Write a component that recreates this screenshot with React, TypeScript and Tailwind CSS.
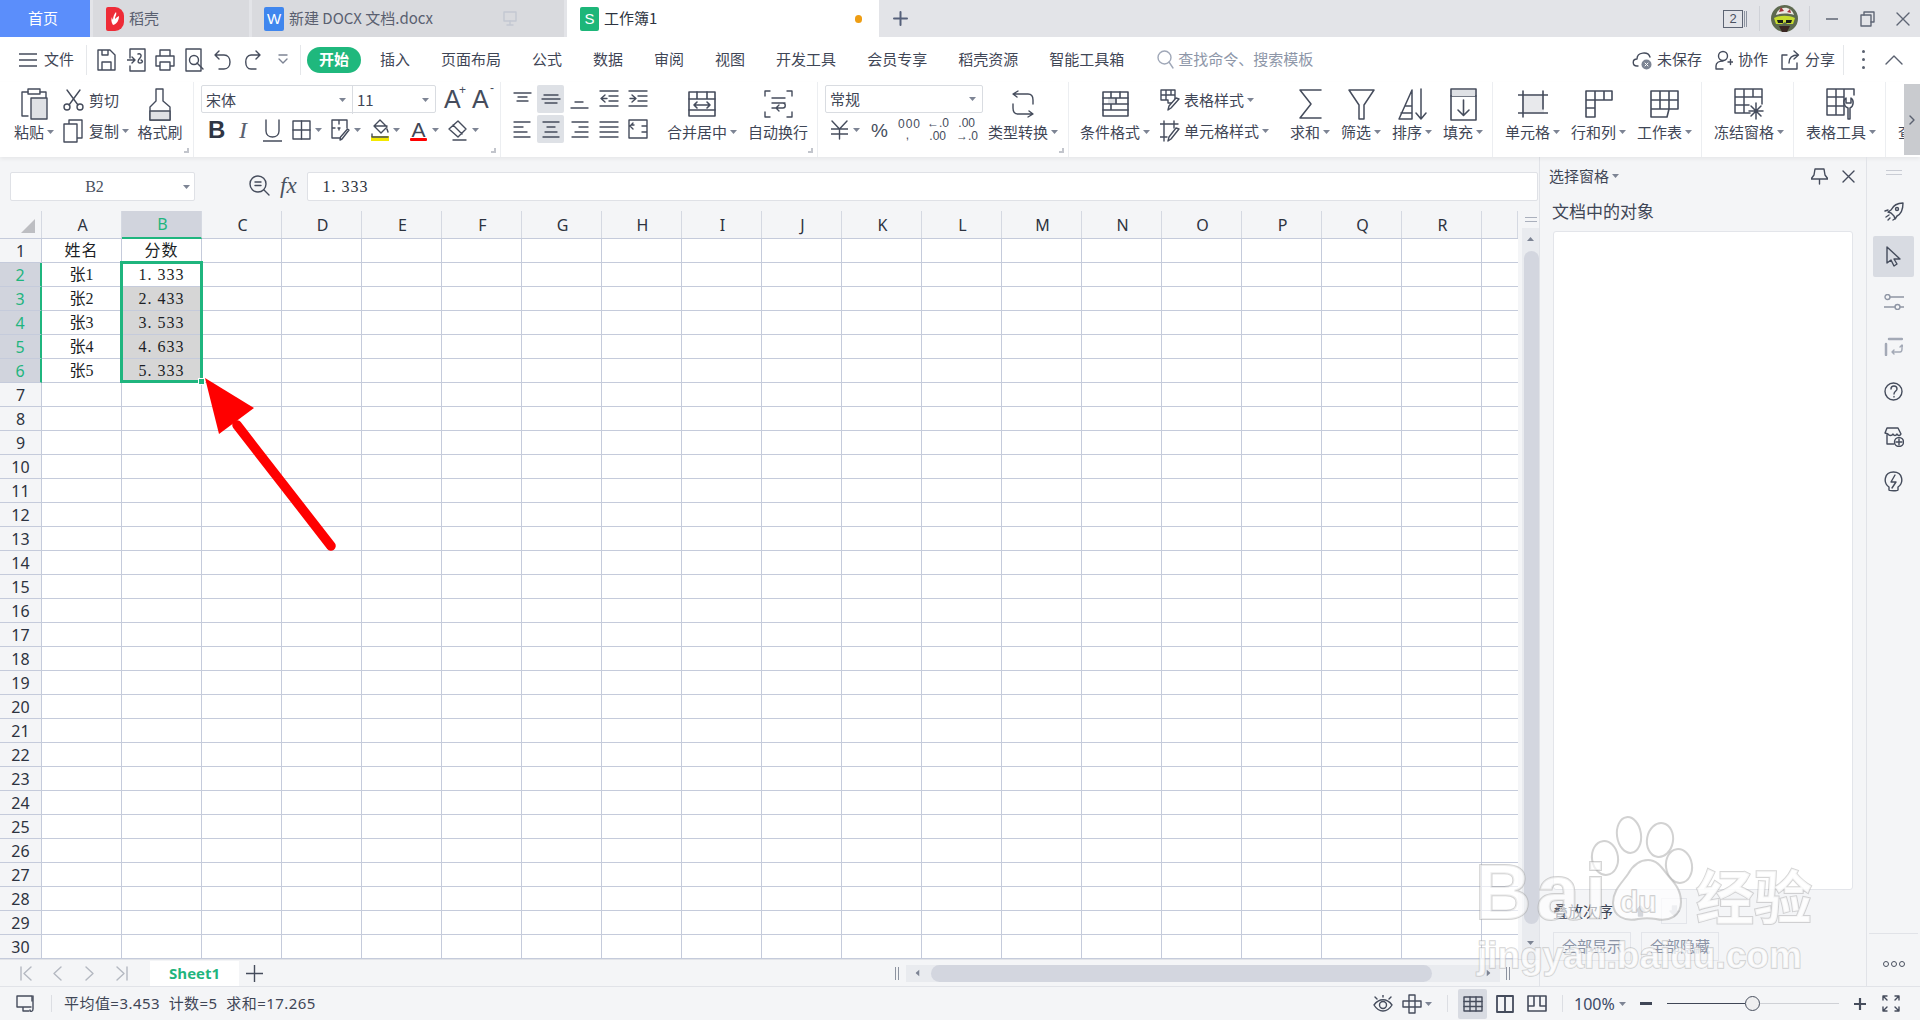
import type { ReactNode } from 'react';

const INK = '#454c5c';
const columns = ['A', 'B', 'C', 'D', 'E', 'F', 'G', 'H', 'I', 'J', 'K', 'L', 'M', 'N', 'O', 'P', 'Q', 'R', ''];
const rows = Array.from({ length: 30 }, (_, i) => i + 1);
const sheetData: Record<string, string> = {
  A1: '姓名', B1: '分数',
  A2: '张1', B2: '1. 333',
  A3: '张2', B3: '2. 433',
  A4: '张3', B4: '3. 533',
  A5: '张4', B5: '4. 633',
  A6: '张5', B6: '5. 333',
};

const Icon = ({ w, h, children, stroke = INK, sw = 1.4 }: { w: number; h: number; children: ReactNode; stroke?: string; sw?: number }) => (
  <svg width={w} height={h} viewBox={`0 0 ${w} ${h}`} fill="none" stroke={stroke} strokeWidth={sw} strokeLinecap="round" strokeLinejoin="round" className="shrink-0 block">
    {children}
  </svg>
);

const Caret = ({ className = '' }: { className?: string }) => (
  <svg width="7" height="4" viewBox="0 0 7 4" className={`shrink-0 ${className}`}>
    <path d="M0 0h7L3.5 4z" fill="#7d8494" />
  </svg>
);

const Corner = () => <div className="absolute right-[4px] bottom-[4px] w-[5px] h-[5px] border-r-2 border-b-2 border-[#c2c5cc]" />;

const BigBtn = ({ icon, label, caret = true, className }: { icon: ReactNode; label: string; caret?: boolean; className: string }) => (
  <div className={`flex flex-col items-center shrink-0 pt-[5px] ${className}`}>
    <div className="h-[34px] flex items-center justify-center">{icon}</div>
    <div className="h-[22px] flex items-center gap-[3px] text-[15px] text-[#3f4656] whitespace-nowrap">
      <span>{label}</span>
      {caret && <Caret />}
    </div>
  </div>
);

const Group = ({ className, children, corner }: { className: string; children: ReactNode; corner?: boolean }) => (
  <div className={`relative flex shrink-0 h-full border-r border-[#eceef1] ${className}`}>
    {children}
    {corner && <Corner />}
  </div>
);

const Select = ({ className, label }: { className: string; label: string }) => (
  <div className={`h-[28px] flex items-center justify-between px-[4px] text-[15px] text-[#3f4656] ${className}`}>
    <span>{label}</span>
    <Caret className="mr-[2px]" />
  </div>
);

const Lines = ({ ys, xs }: { ys: number[]; xs: [number, number][] }) => (
  <Icon w={20} h={22}>
    {ys.map((y, i) => <path key={y} d={`M${xs[i][0]} ${y}H${xs[i][1]}`} />)}
  </Icon>
);

const TabBar = () => (
  <div className="flex h-[37px] bg-[#e3e4e8] shrink-0 items-stretch text-[15px]">
    <div className="w-[90px] bg-[#5b8efb] text-white flex items-center justify-center pr-[4px]">首页</div>
    <div className="ml-[3px] w-[156px] bg-[#d9dade] flex items-center pl-[13px] text-[#5a6070]">
      <div className="w-[18px] h-[24px] rounded-r-[9px] rounded-l-[2px] bg-[#ee2b37] flex items-center justify-center">
        <svg width="12" height="15" viewBox="0 0 12 15"><path d="M7 1c1 3-1 4-1 7 1-1 2-2 4-3 0 4-2 8-6 9C2 11 2 8 3 6c0 2 1 2 1 3 0-3 1-6 3-8z" fill="#fff" /></svg>
      </div>
      <span className="ml-[5px]">稻壳</span>
    </div>
    <div className="ml-[3px] w-[312px] bg-[#d9dade] flex items-center pl-[12px] text-[#5a6070]">
      <div className="w-[20px] h-[24px] rounded-[2px] bg-[#3f86ee] flex items-center justify-center text-white text-[15px] font-['Liberation_Sans'] leading-none">W</div>
      <span className="ml-[5px] whitespace-nowrap">新建 DOCX 文档.docx</span>
      <span className="ml-[70px]">
        <Icon w={14} h={15} stroke="#c3c8d2"><rect x="1" y="1" width="12" height="9" /><path d="M7 10v4M4 14h6" /></Icon>
      </span>
    </div>
    <div className="ml-[3px] w-[312px] bg-white flex items-center pl-[13px] text-[#2d3340]">
      <div className="w-[19px] h-[24px] rounded-[2px] bg-[#1db679] flex items-center justify-center text-white text-[15px] font-['Liberation_Sans'] leading-none">S</div>
      <span className="ml-[5px]">工作簿1</span>
      <span className="ml-auto mr-[17px] w-[7px] h-[8px] rounded-full bg-[#ee9d13]" />
    </div>
    <div className="ml-[14px] flex items-center">
      <Icon w={15} h={15} stroke="#56607a" sw={2}><path d="M7.5 1v13M1 7.5h13" /></Icon>
    </div>
    <div className="ml-auto flex items-center pr-[10px]">
      <div className="relative w-[25px] h-[18px] flex">
        <div className="w-[20px] h-[18px] border border-[#5d6473] text-[13px] leading-[16px] text-center text-[#4a5160] font-['Liberation_Sans']">2</div>
        <div className="ml-[1px] w-px h-[16px] mt-[1px] bg-[#8d93a0]" />
        <div className="ml-[1px] w-px h-[16px] mt-[1px] bg-[#8d93a0]" />
      </div>
      <div className="ml-[11px] w-px h-[25px] bg-[#d0d2d8]" />
      <svg width="27" height="27" viewBox="0 0 27 27" className="ml-[11px]">
        <circle cx="13.5" cy="13.5" r="13.5" fill="#5e6a50" />
        <path d="M5 10c2-9 15-10 18 0-5-2-13-2-18 0z" fill="#ece8e2" />
        <path d="M10 2l3 4-5 1zM19 4l1 4-4-1z" fill="#a3343a" />
        <path d="M3 13c6-3 15-3 21 0l-2 6h-6l-2-2-3 2H5z" fill="#c6dc2e" />
        <path d="M6 15h6v3H7zM15 15h6l-1 3h-5z" fill="#1a1c18" />
        <path d="M8 21h11l-3 6h-5z" fill="#3a2622" />
      </svg>
      <div className="ml-[11px] w-px h-[25px] bg-[#d0d2d8]" />
      <div className="ml-[16px]"><Icon w={12} h={12} stroke="#5f6675"><path d="M0 6h12" /></Icon></div>
      <div className="ml-[22px]"><Icon w={15} h={16} stroke="#5f6675"><rect x="1" y="4" width="10" height="11" /><path d="M4 4V1h10v10h-3" /></Icon></div>
      <div className="ml-[21px]"><Icon w={14} h={14} stroke="#5f6675"><path d="M1 1l12 12M13 1L1 13" /></Icon></div>
    </div>
  </div>
);

const MenuBar = () => (
  <div className="flex h-[45px] bg-white items-center shrink-0 text-[15px] text-[#3f4656]">
    <div className="ml-[19px]"><Icon w={18} h={14}><path d="M0 1h18M0 7h18M0 13h18" /></Icon></div>
    <span className="ml-[7px]">文件</span>
    <div className="ml-[12px] w-px h-[30px] bg-[#e5e7ea]" />
    <div className="ml-[10px]"><Icon w={19} h={22}><path d="M1 1h12l5 5v15H1zM5 21v-8h9v8M5 1v5h6V1" /></Icon></div>
    <div className="ml-[11px]"><Icon w={19} h={24}><path d="M3 1h15v22H3v-5M3 10V1" /><path d="M0 12h7M5 9l3 3-3 3M11 6c3-1 4 2 2 4s-3 5 0 5 3-2 1-3" /></Icon></div>
    <div className="ml-[9px]"><Icon w={20} h={22}><path d="M5 7V1h10v6M5 17H1V7h18v10h-4M5 13h10v8H5z" /></Icon></div>
    <div className="ml-[10px]"><Icon w={19} h={24}><path d="M15 1H1v22h15V1M1 1" /><circle cx="9" cy="12" r="4.5" /><path d="M12 15l6 6" /></Icon></div>
    <div className="ml-[10px]"><Icon w={17} h={20}><path d="M5 1L1 5l4 4M1 5h9c8 0 8 14 0 14H5" /></Icon></div>
    <div className="ml-[14px]"><Icon w={16} h={20}><path d="M11 1l4 4-4 4M15 5H6c-7 0-7 14 0 14h5" /></Icon></div>
    <div className="ml-[17px]"><Icon w={10} h={11} stroke="#7d8494"><path d="M1 1h8M1 5l4 4 4-4" /></Icon></div>
    <div className="ml-[12px] w-px h-[30px] bg-[#e5e7ea]" />
    <div className="ml-[6px] w-[54px] h-[26px] rounded-full bg-[#1fb87d] text-white font-bold flex items-center justify-center">开始</div>
    <div className="ml-[19px] flex gap-[31px] whitespace-nowrap">
      {['插入', '页面布局', '公式', '数据', '审阅', '视图', '开发工具', '会员专享', '稻壳资源', '智能工具箱'].map((t) => <span key={t}>{t}</span>)}
    </div>
    <div className="ml-[33px]"><Icon w={17} h={19} stroke="#a0a8b8"><circle cx="7.5" cy="7.5" r="6.5" /><path d="M12 12l4 6" /></Icon></div>
    <span className="ml-[4px] text-[#8d96a8] whitespace-nowrap">查找命令、搜索模板</span>
    <div className="ml-auto flex items-center pr-[17px]">
      <Icon w={21} h={20}>
        <path d="M6 16H5c-5 0-5-7 0-7 0-7 11-8 13-2" />
        <circle cx="14.5" cy="14.5" r="5" fill="#7c8493" stroke="none" />
        <path d="M13 13l3 3M16 13l-3 3" stroke="#fff" strokeWidth="1" />
      </Icon>
      <span className="ml-[4px]">未保存</span>
      <div className="ml-[13px]"><Icon w={18} h={20}><circle cx="8" cy="6" r="4.5" /><path d="M1 19v-3c0-3 3-5 7-5M8 19H2M13 12h5M15.5 9.5v5" /></Icon></div>
      <span className="ml-[5px]">协作</span>
      <div className="ml-[13px]"><Icon w={19} h={20}><path d="M6 5H1v14h15v-6M8 13c0-5 3-8 9-8M13 1l4.500 4L13 9" /></Icon></div>
      <span className="ml-[5px]">分享</span>
      <div className="ml-[8px] w-px h-[30px] bg-[#e5e7ea]" />
      <div className="ml-[18px] flex flex-col gap-[5px]">
        <span className="w-[3px] h-[3px] bg-[#5a6170] rounded-full" />
        <span className="w-[3px] h-[3px] bg-[#5a6170] rounded-full" />
        <span className="w-[3px] h-[3px] bg-[#5a6170] rounded-full" />
      </div>
      <div className="ml-[20px]"><Icon w={18} h={10} stroke="#5a6170"><path d="M1 9l8-8 8 8" /></Icon></div>
    </div>
  </div>
);

const Ribbon = () => (
  <div className="flex h-[75px] bg-white shrink-0 shadow-[0_2px_4px_rgba(0,0,0,0.06)] relative overflow-hidden">
    <Group className="w-[194px]" corner>
      <BigBtn
        className="ml-[12px] w-[44px]"
        label="粘贴"
        icon={<Icon w={28} h={32}><path d="M8 4H2v24h6" /><rect x="8" y="1" width="12" height="5" /><path d="M20 4h6v6" /><rect x="11" y="10" width="16" height="21" fill="#dfe1e5" /></Icon>}
      />
      <div className="ml-[7px] w-[68px] pt-[4px]">
        <div className="h-[28px] flex items-center">
          <Icon w={21} h={22}><circle cx="4" cy="18" r="3" /><circle cx="17" cy="18" r="3" /><path d="M6 16L17 1M15 16L4 1" /></Icon>
          <span className="ml-[5px] text-[15px] text-[#3f4656]">剪切</span>
        </div>
        <div className="mt-[3px] h-[28px] flex items-center">
          <Icon w={21} h={24}><path d="M6 5V1h13v18h-5M1 5h13v18H1z" /></Icon>
          <span className="ml-[5px] text-[15px] text-[#3f4656]">复制</span>
          <Caret className="ml-[3px]" />
        </div>
      </div>
      <BigBtn
        className="ml-[7px] w-[44px]"
        label="格式刷"
        caret={false}
        icon={<Icon w={24} h={33}><path d="M8 1h7v12l7 6v13H2V19l6-6z" /><path d="M2 23h20v9H2z" fill="#dfe1e5" /></Icon>}
      />
    </Group>

    <Group className="w-[307px] flex-col pl-[7px] pt-[3px]" corner>
      <div className="flex items-center">
        <div className="flex w-[235px] h-[28px] border border-[#d9dce1] rounded-[2px]">
          <Select className="w-[151px] border-r border-[#d9dce1] h-[26px] px-[2px]" label="宋体" />
          <Select className="flex-1 h-[26px]" label="11" />
        </div>
        <div className="ml-[8px] w-[20px] relative text-[25px] leading-none text-[#454c5c] font-['Liberation_Sans']">
          A<span className="absolute -top-[3px] -right-[2px] text-[12px]">+</span>
        </div>
        <div className="ml-[8px] w-[20px] relative text-[25px] leading-none text-[#454c5c] font-['Liberation_Sans']">
          A<span className="absolute -top-[5px] -right-[2px] text-[12px]">-</span>
        </div>
      </div>
      <div className="mt-[3px] h-[28px] flex items-center font-['Liberation_Sans'] text-[#2f3644]">
        <span className="ml-[7px] w-[15px] text-[24px] font-bold leading-none">B</span>
        <span className="ml-[16px] w-[10px] text-[24px] italic leading-none font-['Liberation_Serif'] text-[#5a6170]">I</span>
        <div className="ml-[14px]"><Icon w={19} h={23}><path d="M3 1v11c0 8 13 8 13 0V1M0 22h19" /></Icon></div>
        <div className="ml-[10px]"><Icon w={19} h={20}><rect x="1" y="1" width="17" height="18" /><path d="M9.500 1v18M1 10h17" /></Icon></div>
        <Caret className="ml-[4px]" />
        <div className="ml-[9px]"><Icon w={19} h={22}><path d="M1 1h15v8M1 1v18h8M8 1v4M8 9v2M1 9h3M7 9h2" /><path d="M18 11l-7 9-2 1 .500-3 7-8z" /></Icon></div>
        <Caret className="ml-[4px]" />
        <div className="ml-[10px]">
          <Icon w={18} h={23}><path d="M9 1l7 7-6 6-7-7zM3 7h13" /><path d="M16 10l1 3" /><rect x="0" y="17" width="18" height="5" fill="#f4e900" stroke="none" /><path d="M1 15v3h16" stroke="#454c5c" /></Icon>
        </div>
        <Caret className="ml-[4px]" />
        <div className="ml-[10px] w-[17px] flex flex-col items-center leading-none">
          <span className="text-[21px] h-[19px] text-[#3f4656]">A</span>
          <div className="w-[17px] h-[3px] bg-[#f00] rounded-[1px]" />
        </div>
        <Caret className="ml-[5px]" />
        <div className="ml-[9px]"><Icon w={19} h={21}><path d="M10 1l8 8-8 8-9-8zM5 5l9 9M5 20h13" /></Icon></div>
        <Caret className="ml-[5px]" />
      </div>
    </Group>

    <Group className="w-[317px] pl-[12px] pt-[3px]" corner>
      <div className="w-[135px] shrink-0">
        <div className="flex items-center h-[28px]">
          <div className="w-[18px]"><Lines ys={[5, 9, 13]} xs={[[1, 18], [5, 14], [4, 15]]} /></div>
          <div className="ml-[6px] w-[28px] h-[28px] bg-[#dee1e6] rounded-[2px] flex items-center justify-center"><Lines ys={[7, 11, 15]} xs={[[3, 17], [1, 19], [4, 16]]} /></div>
          <div className="ml-[6px] w-[18px]"><Lines ys={[14, 20]} xs={[[5, 13], [1, 18]]} /></div>
          <div className="ml-[11px]"><Icon w={20} h={22}><path d="M1 3h18M10 8h9M10 13h9M1 18h18M6 7L2 10.500 6 14M2 10.500h6" /></Icon></div>
          <div className="ml-[9px]"><Icon w={20} h={22}><path d="M1 3h18M10 8h9M10 13h9M1 18h18M4 7l4 3.500L4 14M8 10.500H2" /></Icon></div>
        </div>
        <div className="flex items-center h-[28px] mt-[2px]">
          <div className="w-[18px]"><Lines ys={[4, 9, 14, 19]} xs={[[1, 17], [1, 10], [1, 14], [1, 17]]} /></div>
          <div className="ml-[6px] w-[28px] h-[28px] bg-[#dee1e6] rounded-[2px] flex items-center justify-center"><Lines ys={[4, 9, 14, 19]} xs={[[2, 18], [6, 14], [4, 16], [2, 18]]} /></div>
          <div className="ml-[6px] w-[18px]"><Lines ys={[4, 9, 14, 19]} xs={[[2, 18], [9, 18], [5, 18], [2, 18]]} /></div>
          <div className="ml-[11px]"><Lines ys={[4, 9, 14, 19]} xs={[[1, 19], [1, 19], [1, 19], [1, 19]]} /></div>
          <div className="ml-[9px]"><Icon w={20} h={22}><path d="M1 2v18M19 2v18M1 2h18M1 20h18M6 7h-3M14 8h5M14 14h5M5 5l-3 3 3 3" /></Icon></div>
        </div>
      </div>
      <BigBtn
        className="ml-[18px] w-[72px] -mt-[3px]"
        label="合并居中"
        icon={<Icon w={28} h={26} sw={1.6}><rect x="1" y="1" width="26" height="24" /><path d="M1 8h26M9 1v7M19 1v7M1 19h26M6 14h16M9 11l-3 3 3 3M19 11l3 3-3 3" /></Icon>}
      />
      <BigBtn
        className="ml-[10px] w-[60px] -mt-[3px]"
        label="自动换行"
        caret={false}
        icon={<Icon w={29} h={28}><path d="M6 1H1v5M23 1h5v5M1 22v5h5M28 22v5h-5M8 8h13M8 13h13M8 18h11c3 0 3-5 0-5M12 18l3-3M12 18l3 3" /></Icon>}
      />
    </Group>

    <Group className="w-[251px] pl-[7px] pt-[3px]" corner>
      <div className="w-[158px] shrink-0">
        <Select className="w-[158px] border border-[#d9dce1] rounded-[2px]" label="常规" />
        <div className="mt-[3px] h-[28px] flex items-center text-[#454c5c]">
          <div className="ml-[6px]"><Icon w={17} h={20}><path d="M1 1l7.500 8L16 1M0 9h17M0 14h17M8.500 9v10" /></Icon></div>
          <Caret className="ml-[5px]" />
          <span className="ml-[11px] w-[16px] text-[19px] leading-none font-['Liberation_Sans']">%</span>
          <span className="ml-[11px] w-[20px] text-[12px] leading-[11px] text-center font-['Liberation_Sans'] tracking-[1px]">000<br />,</span>
          <span className="ml-[9px] w-[19px] text-[12px] leading-[13px] text-right font-['Liberation_Sans'] whitespace-nowrap">←.0<br />.00</span>
          <span className="ml-[10px] w-[19px] text-[12px] leading-[13px] text-right font-['Liberation_Sans'] whitespace-nowrap">.00<br />→.0</span>
        </div>
      </div>
      <BigBtn
        className="ml-[5px] w-[70px] -mt-[3px]"
        label="类型转换"
        icon={<Icon w={24} h={28}><path d="M7 1L2 4l4 3M3 4h14c4 0 5 3 5 6v4M17 27l5-3-4-3M21 24H7c-4 0-5-3-5-6v-4" /></Icon>}
      />
    </Group>

    <Group className="w-[424px]">
      <BigBtn
        className="ml-[11px] w-[70px]"
        label="条件格式"
        icon={<Icon w={27} h={26} sw={1.6}><rect x="1" y="1" width="25" height="24" /><rect x="6" y="6" width="9" height="7" fill="#dfe1e5" stroke="none" /><path d="M1 7h25M1 13h25M1 19h25M9 1v6M18 1v6M9 13v6M14 7v6" /></Icon>}
      />
      <div className="ml-[10px] w-[115px] pt-[4px]">
        <div className="h-[28px] flex items-center">
          <Icon w={20} h={22}><path d="M1 1h14v13H8v-3H1zM1 6h14M6 1v10M11 1v5M1 11h7" /><path d="M19 10l-8 9-3 2 1-4 7-8z" fill="#fff" /></Icon>
          <span className="ml-[4px] text-[15px] text-[#3f4656]">表格样式</span>
          <Caret className="ml-[3px]" />
        </div>
        <div className="mt-[3px] h-[28px] flex items-center">
          <Icon w={20} h={23}><path d="M4 1v20M14 1v7M0 4h18M0 17h7" /><path d="M19 9l-8 10-3 2 1-4 7-9z" fill="#fff" /></Icon>
          <span className="ml-[4px] text-[15px] text-[#3f4656] whitespace-nowrap">单元格样式</span>
          <Caret className="ml-[3px]" />
        </div>
      </div>
      <BigBtn
        className="ml-[15px] w-[40px]"
        label="求和"
        icon={<Icon w={23} h={30} sw={1.5}><path d="M22 1H1l11 14L1 29h21" /></Icon>}
      />
      <BigBtn
        className="ml-[11px] w-[40px]"
        label="筛选"
        icon={<Icon w={27} h={31} sw={1.5}><path d="M1 1h25L16 16v14h-5V16z" /></Icon>}
      />
      <BigBtn
        className="ml-[11px] w-[40px]"
        label="排序"
        icon={<Icon w={29} h={32} sw={1.5}><path d="M1 31L14 2v29zM7 18h7M3 25h11M23 1v30M18 25l5 6 5-6" /></Icon>}
      />
      <BigBtn
        className="ml-[11px] w-[40px]"
        label="填充"
        icon={<Icon w={27} h={33} sw={1.6}><rect x="1" y="1" width="25" height="31" /><path d="M1 8h25M13.500 12v15M8 22l5.500 5.500L19 22" /><rect x="2" y="2" width="23" height="6" fill="#dfe1e5" stroke="none" /></Icon>}
      />
    </Group>

    <Group className="w-[209px]">
      <BigBtn
        className="ml-[12px] w-[55px]"
        label="单元格"
        icon={<Icon w={30} h={28} sw={1.6}><rect x="4" y="4" width="22" height="20" fill="#e8e9ec" stroke="none" /><path d="M5 1v26M25 1v18M0 5h30M0 23h30M25 23h1" /></Icon>}
      />
      <BigBtn
        className="ml-[11px] w-[55px]"
        label="行和列"
        icon={<Icon w={28} h={28} sw={1.6}><path d="M1 1h26v9H10v17H1zM1 10h9M1 18h9M10 1v9M19 1v9" /></Icon>}
      />
      <BigBtn
        className="ml-[11px] w-[55px]"
        label="工作表"
        icon={<Icon w={29} h={28} sw={1.6}><path d="M1 1h27v18H19l-2 8H1zM1 10h27M1 19h17M10 1v18M19 1v18" /></Icon>}
      />
    </Group>

    <Group className="w-[92px]">
      <BigBtn
        className="ml-[12px] w-[70px]"
        label="冻结窗格"
        icon={<Icon w={30} h={32} sw={1.5}><path d="M16 25H1V1h27v15M1 9h27M1 17h14M10 1v24M19 1v8" /><path d="M22 15v16M15 23h14M17 18l10 10M27 18L17 28" /></Icon>}
      />
    </Group>

    <Group className="w-[92px]">
      <BigBtn
        className="ml-[12px] w-[70px]"
        label="表格工具"
        icon={<Icon w={30} h={32} sw={1.5}><path d="M18 27H1V1h27v6M1 9h17M1 18h17M10 1v26M18 1v26" /><path d="M22 31V20c-5-2-5-8-2-10v5h5v-5c3 2 3 8-1 10v11z" fill="#fff" /></Icon>}
      />
    </Group>

    <div className="ml-[12px] w-[6px] overflow-hidden pt-[39px] text-[15px] text-[#3f4656] shrink-0">查</div>
    <div className="w-[16px] my-[2px] bg-[#c9cbcf] flex items-center justify-center shrink-0">
      <Icon w={6} h={10} stroke="#5a6170"><path d="M1 1l4 4-4 4" /></Icon>
    </div>
  </div>
);

const FormulaBar = () => (
  <div className="h-[54px] shrink-0 flex items-start pt-[15px] pl-[10px]">
    <div className="w-[185px] h-[29px] bg-white border border-[#dfe1e6] rounded-[2px] flex items-center">
      <span className="flex-1 text-center text-[16px] text-[#4a5160] font-['Liberation_Serif'] pr-[5px]">B2</span>
      <Caret className="mr-[4px]" />
    </div>
    <div className="ml-[54px] mt-[3px]"><Icon w={21} h={21}><circle cx="9" cy="9" r="8" /><path d="M6 7h6M6 10.500h6M15 15l5 5" /></Icon></div>
    <span className="ml-[10px] text-[23px] leading-[28px] italic font-['Liberation_Serif'] text-[#4a5160]">fx</span>
    <div className="ml-[10px] w-[1231px] h-[29px] bg-white border border-[#dfe1e6] rounded-[2px] flex items-center pl-[15px] text-[16px] text-[#2d3340] font-['Liberation_Serif'] tracking-[1px]">1. 333</div>
  </div>
);

const SheetGrid = () => (
  <div className="relative w-[1518px] shrink-0 overflow-hidden">
    <div className="flex h-[28px] border-b border-[#c5cbdb]">
      <div className="w-[42px] shrink-0 relative border-r border-[#d5d9e2]">
        <svg width="14" height="14" viewBox="0 0 14 14" className="absolute left-[21px] top-[8px]"><path d="M14 0v14H0z" fill="#bdbec2" /></svg>
      </div>
      {columns.map((c) => (
        <div
          key={c || 'end'}
          className={`${c === '' ? 'flex-1' : 'w-[80px]'} shrink-0 flex items-center justify-center pl-[2px] text-[16px] font-['Noto_Sans'] border-r border-[#d5d9e2] ${c === 'B' ? 'bg-[#d1d4dd] text-[#1fb57e] border-b-2 border-b-[#1fb57e] h-[28px]' : 'text-[#2d3340]'}`}
        >
          {c}
        </div>
      ))}
    </div>
    {rows.map((r) => {
      const picked = r >= 2 && r <= 6;
      return (
        <div key={r} className="flex h-[24px]">
          <div className={`w-[42px] shrink-0 flex items-center justify-center text-[16px] font-['Noto_Sans'] border-b border-[#c5cbdb] ${picked ? 'bg-[#d1d4dd] text-[#1fb57e] border-r-2 border-r-[#1fb57e]' : 'text-[#2d3340] border-r border-r-[#c5cbdb]'}`}>
            {r}
          </div>
          {columns.map((c) => {
            const grey = c === 'B' && r >= 3 && r <= 6;
            return (
              <div
                key={c || 'end'}
                className={`${c === '' ? 'flex-1 border-r-0' : 'w-[80px] border-r'} shrink-0 flex items-center justify-center pt-[1px] border-b border-[#c5cbdb] text-[16px] text-[#1c1f26] font-['Liberation_Serif','Noto_Sans_CJK_SC',serif] ${grey ? 'bg-[#d6d6d6]' : 'bg-white'} ${(c === 'B' && picked) || r === 1 ? 'tracking-[1px]' : ''}`}
              >
                {sheetData[`${c}${r}`]}
              </div>
            );
          })}
        </div>
      );
    })}
    <div className="absolute left-[120px] top-[50px] w-[83px] h-[122px] border-[3px] border-[#1fb57e] pointer-events-none" />
    <div className="absolute left-[198px] top-[167px] w-[7px] h-[7px] bg-[#1fb57e] border border-white pointer-events-none" />
  </div>
);

const VScroll = () => (
  <div className="w-[17px] ml-[4px] shrink-0 flex flex-col items-center">
    <div className="h-[17px] w-full flex flex-col items-center justify-center gap-[3px]">
      <div className="w-[12px] h-px bg-[#aab0bd]" />
      <div className="w-[12px] h-px bg-[#aab0bd]" />
    </div>
    <div className="flex-1 w-full bg-[#e9ebef] flex flex-col items-center">
      <Caret className="rotate-180 mt-[9px]" />
      <div className="mt-[10px] w-[15px] ml-[2px] h-[673px] rounded-full bg-[#d3d6df]" />
      <Caret className="mt-[17px]" />
    </div>
  </div>
);

const SheetBar = () => (
  <div className="h-[27px] shrink-0 flex items-center border-t border-[#e1e3e8]">
    <div className="ml-[20px]"><Icon w={12} h={15} stroke="#b4b8c1"><path d="M1 1v13M11 1L4 7.500l7 6.500" /></Icon></div>
    <div className="ml-[21px]"><Icon w={9} h={15} stroke="#b4b8c1"><path d="M8 1L1 7.500 8 14" /></Icon></div>
    <div className="ml-[23px]"><Icon w={9} h={15} stroke="#b4b8c1"><path d="M1 1l7 6.500L1 14" /></Icon></div>
    <div className="ml-[22px]"><Icon w={12} h={15} stroke="#b4b8c1"><path d="M11 1v13M1 1l7 6.500L1 14" /></Icon></div>
    <div className="ml-[22px] w-[89px] h-[25px] bg-white flex items-center justify-center text-[15px] font-bold text-[#1fb57e] font-['Open_Sans']">Sheet1</div>
    <div className="ml-[7px]"><Icon w={17} h={17} stroke="#454c5c"><path d="M8.500 0v17M0 8.500h17" /></Icon></div>
    <div className="ml-[632px] flex gap-[2px]">
      <div className="w-px h-[13px] bg-[#8d93a0]" />
      <div className="w-px h-[13px] bg-[#8d93a0]" />
    </div>
    <div className="ml-[7px] w-[594px] h-[17px] bg-[#e9ebef] flex items-center">
      <Caret className="rotate-90 ml-[8px]" />
      <div className="ml-[10px] w-[501px] h-[17px] rounded-full bg-[#d3d6df]" />
      <Caret className="-rotate-90 ml-[53px]" />
    </div>
    <div className="ml-[6px] flex gap-[2px]">
      <div className="w-px h-[13px] bg-[#8d93a0]" />
      <div className="w-px h-[13px] bg-[#8d93a0]" />
    </div>
  </div>
);

const SelectionPane = () => (
  <div className="w-[327px] shrink-0 border-l border-[#e1e3e8] flex flex-col text-[#3f4656] pl-[13px]">
    <div className="h-[38px] flex items-center -ml-[4px] pr-[11px]">
      <span className="text-[15px]">选择窗格</span>
      <Caret className="ml-[3px]" />
      <div className="ml-auto"><Icon w={17} h={17}><path d="M4 1h9l1 6 3 4H0l3-4zM8.500 11v5" /></Icon></div>
      <div className="ml-[14px]"><Icon w={13} h={13}><path d="M1 1l11 11M12 1L1 12" /></Icon></div>
    </div>
    <div className="h-[36px] flex items-center pb-[5px] text-[17px] -ml-px">文档中的对象</div>
    <div className="w-[300px] h-[659px] bg-white border border-[#e3e5ea] rounded-[3px]" />
    <div className="h-[42px] flex items-center text-[15px]">
      <span>叠放次序</span>
      <div className="ml-[22px]"><Icon w={11} h={12} stroke="#6f7686"><path d="M5.500 1L1 6h2.500v5h4V6H10z" fill="#6f7686" /></Icon></div>
      <div className="ml-[15px] w-[26px] h-[26px] border border-[#e3e5ea] flex items-center justify-center">
        <Icon w={11} h={12} stroke="#c6cad3"><path d="M5.500 11L1 6h2.500V1h4v5H10z" fill="#c6cad3" /></Icon>
      </div>
    </div>
    <div className="flex gap-[10px]">
      <div className="w-[78px] h-[29px] border border-[#e3e5ea] flex items-center justify-center text-[15px] text-[#8a93a6]">全部显示</div>
      <div className="w-[78px] h-[29px] border border-[#e3e5ea] flex items-center justify-center text-[15px] text-[#8a93a6]">全部隐藏</div>
    </div>
  </div>
);

const RailSlot = ({ children }: { children: ReactNode }) => <div className="h-[45px] flex items-center justify-center">{children}</div>;

const RightRail = () => (
  <div className="w-[54px] shrink-0 border-l border-[#e1e3e8] flex flex-col items-center relative">
    <div className="mt-[13px] w-[16px] flex flex-col gap-[3px]">
      <div className="h-px bg-[#c9ccd4]" />
      <div className="h-px bg-[#c9ccd4]" />
    </div>
    <div className="mt-[14px]">
      <RailSlot>
        <Icon w={20} h={20}><path d="M19 1c-6 0-10 3-12 7l-3 2 3 1 3 3 1 3 2-3c4-2 6-6 6-13zM1 9l3-1M9 18l3-2M2 15l3-2M4 18l2-2" /><circle cx="13" cy="7" r="1.500" /></Icon>
      </RailSlot>
    </div>
    <RailSlot>
      <div className="w-[41px] h-[41px] rounded-[2px] bg-[#d8dbe2] flex items-center justify-center">
        <Icon w={16} h={21}><path d="M1 1v16l4-3 3 6 3-2-3-5h6z" /></Icon>
      </div>
    </RailSlot>
    <RailSlot>
      <Icon w={20} h={16} stroke="#8e95a4"><circle cx="3.500" cy="3" r="2.500" /><path d="M6 3h14M0 13h11M16 13h4" /><circle cx="13.500" cy="13" r="2.500" /></Icon>
    </RailSlot>
    <RailSlot>
      <Icon w={19} h={19} stroke="#a3a9b6"><path d="M5 2h13M2 7v11" strokeWidth="2.500" /><path d="M8 15h8c2 0 2-2 2-3V8M18 8l-2 2M18 8l2 2M8 15l2-2M8 15l2 2" /></Icon>
    </RailSlot>
    <RailSlot>
      <Icon w={19} h={19}><circle cx="9.500" cy="9.500" r="8.500" /><path d="M7 7c0-4 6-4 6 0 0 2-3 2-3 5M10 14.500v.500" /></Icon>
    </RailSlot>
    <RailSlot>
      <Icon w={20} h={20}><path d="M3 1h11l3 6c-1 2-3 2-4 0-1 2-3 2-4 0-1 2-4 2-5 0L1 6zM3 8v9h7" /><circle cx="15" cy="15" r="4.500" /><path d="M15 12v6M12 15h6" /></Icon>
    </RailSlot>
    <RailSlot>
      <Icon w={19} h={21}><path d="M5 16v3c0 1 9 1 9 0v-3c6-4 5-15-4.500-15S-1 12 5 16z" /><path d="M11 4l-4 7h5l-4 6" /></Icon>
    </RailSlot>
    <div className="mt-auto w-[49px] h-px bg-[#e1e3e8]" />
    <div className="h-[52px] flex items-start pt-[27px] gap-[2px]">
      <span className="w-[6px] h-[6px] rounded-full border-[1.5px] border-[#4a5160]" />
      <span className="w-[6px] h-[6px] rounded-full border-[1.5px] border-[#4a5160]" />
      <span className="w-[6px] h-[6px] rounded-full border-[1.5px] border-[#4a5160]" />
    </div>
  </div>
);

const StatusBar = () => (
  <div className="h-[34px] shrink-0 border-t border-[#e1e3e8] flex items-center text-[15px] text-[#3f4656] font-['Noto_Sans','Noto_Sans_CJK_SC',sans-serif]">
    <div className="ml-[16px]">
      <Icon w={20} h={18}><path d="M15 12H1V1h15v5M7 12v4h6" /><path d="M17 1v13c0 3-3 3-3 1" /></Icon>
    </div>
    <div className="ml-[15px] w-px h-[17px] bg-[#dcdee3]" />
    <span className="ml-[12px] whitespace-pre w-[300px] tracking-[0.45px]">平均值=3.453  计数=5  求和=17.265</span>
    <div className="ml-[1009px]"><Icon w={20} h={17}><path d="M1 10c5-7 13-7 18 0-5 8-13 8-18 0z" /><circle cx="10" cy="10" r="3.500" /><path d="M10 0v2M2 2l2 2M18 2l-2 2" /></Icon></div>
    <div className="ml-[9px]"><Icon w={20} h={20}><path d="M7 1h6v6h6v6h-6v6H7v-6H1V7h6zM7 7h6v6H7z" /></Icon></div>
    <Caret className="ml-[3px]" />
    <div className="ml-[15px] w-px h-[17px] bg-[#dcdee3]" />
    <div className="ml-[10px] w-[29px] h-[30px] rounded-[2px] bg-[#d8dbe2] flex items-center justify-center">
      <Icon w={20} h={16}><rect x="1" y="1" width="18" height="14" /><path d="M1 5.500h18M1 10.500h18M7 1v14M13 1v14" /></Icon>
    </div>
    <div className="ml-[9px]"><Icon w={18} h={18} sw={1.8}><rect x="1" y="1" width="16" height="16" /><path d="M9 1v16" /></Icon></div>
    <div className="ml-[13px]"><Icon w={20} h={17} sw={1.6}><path d="M1 1h18v15H1zM1 11h6V1M13 1v10h6" /></Icon></div>
    <div className="ml-[15px] w-px h-[17px] bg-[#dcdee3]" />
    <span className="ml-[11px] w-[39px] text-[#3b4a66] text-[16px]">100%</span>
    <Caret className="ml-[6px]" />
    <div className="ml-[14px] w-[12px] h-[2.500px] bg-[#3f4656]" />
    <div className="ml-[15px] w-[172px] h-px flex items-center bg-[#cfd1d6]">
      <div className="w-[78px] h-px bg-[#3f4656]" />
      <div className="w-[15px] h-[15px] rounded-full bg-[#efeff0] border border-[#4a5160] shrink-0" />
    </div>
    <div className="ml-[15px]"><Icon w={12} h={12} sw={2.2}><path d="M6 0v12M0 6h12" /></Icon></div>
    <div className="ml-[16px]"><Icon w={18} h={17}><path d="M1 1l4 4M1 1v4M1 1h4M17 1l-4 4M17 1v4M17 1h-4M1 16l4-4M1 16v-4M1 16h4M17 16l-4-4M17 16v-4M17 16h-4" /></Icon></div>
  </div>
);

const Overlays = () => (
  <>
    <svg width="1920" height="1020" viewBox="0 0 1920 1020" className="absolute inset-0 pointer-events-none">
      <path d="M331 546L237 425" stroke="#f00" strokeWidth="9.500" strokeLinecap="round" fill="none" />
      <path d="M205 378L254 408L219 434z" fill="#f00" />
      <g fill="rgba(255,255,255,0.7)" stroke="rgba(165,165,165,0.5)" strokeWidth="2">
        <ellipse cx="1605" cy="858" rx="13" ry="17" transform="rotate(-8 1605 858)" />
        <ellipse cx="1629" cy="835" rx="12" ry="18" transform="rotate(-8 1629 835)" />
        <ellipse cx="1660" cy="840" rx="13" ry="17" transform="rotate(10 1660 840)" />
        <ellipse cx="1679" cy="866" rx="13" ry="17" transform="rotate(-8 1679 866)" />
        <path d="M1648 860c8 0 13 6 18 13 5 7 15 14 15 29 0 14-12 20-25 17-6-1-12-1-18 0-13 3-25-3-25-16 0-13 9-20 15-29 4-7 11-14 20-14z" />
      </g>
    </svg>
    <div className="absolute left-[1475px] top-[847px] pointer-events-none font-['Liberation_Sans'] font-bold text-[78px] leading-[90px] tracking-[5px] text-white/60 [-webkit-text-stroke:2px_rgba(165,165,165,0.5)] [paint-order:stroke]">Bai</div>
    <div className="absolute left-[1620px] top-[884px] pointer-events-none font-['Liberation_Sans'] font-bold text-[30px] leading-[36px] text-white/60 [-webkit-text-stroke:1.5px_rgba(165,165,165,0.6)] [paint-order:stroke]">du</div>
    <div className="absolute left-[1696px] top-[860px] pointer-events-none font-['Noto_Sans_CJK_SC'] font-bold text-[58px] leading-[68px] text-white/80 [-webkit-text-stroke:2px_rgba(165,165,165,0.45)] [paint-order:stroke]">经验</div>
    <div className="absolute left-[1477px] top-[932px] pointer-events-none font-['Liberation_Sans'] font-bold text-[37px] leading-[48px] text-white/70 [-webkit-text-stroke:1.5px_rgba(165,165,165,0.5)] [paint-order:stroke] whitespace-nowrap">jingyan.baidu.com</div>
  </>
);

export default function App() {
  return (
    <div className="relative w-[1920px] h-[1020px] overflow-hidden bg-[#f4f5f7] flex flex-col font-['Noto_Sans_CJK_SC','Noto_Sans',sans-serif]">
      <TabBar />
      <MenuBar />
      <Ribbon />
      <div className="flex h-[829px] shrink-0">
        <div className="w-[1539px] shrink-0 flex flex-col">
          <FormulaBar />
          <div className="flex h-[748px] shrink-0">
            <SheetGrid />
            <VScroll />
          </div>
          <SheetBar />
        </div>
        <SelectionPane />
        <RightRail />
      </div>
      <StatusBar />
      <Overlays />
    </div>
  );
}
